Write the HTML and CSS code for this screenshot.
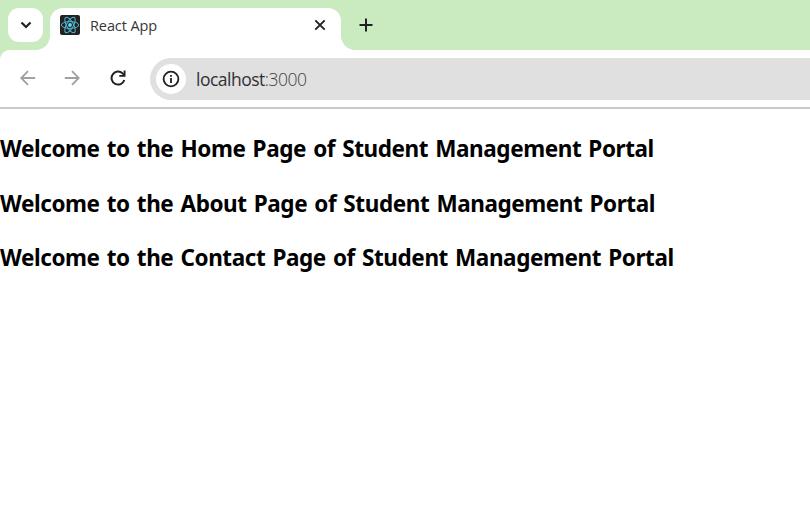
FILE: index.html
```html
<!DOCTYPE html>
<html lang="en">
<head>
<meta charset="utf-8">
<title>React App</title>
<link rel="stylesheet" href="styles.css">
</head>
<body>
<header class="tab-strip">
  <button class="tab-search" aria-label="Search tabs">
    <svg width="12" height="8" viewBox="0 0 12 8"><path d="M1.500 1.500 6 6l4.500-4.500" fill="none" stroke="#202124" stroke-width="2.200"/></svg>
  </button>
  <div class="tab">
    <svg class="favicon" width="20" height="20" viewBox="0 0 20 20">
      <rect width="20" height="20" rx="2" fill="#222"/>
      <g fill="none" stroke="#4fb5d0" stroke-width="1">
        <ellipse cx="10" cy="10" rx="8.700" ry="3.400"/>
        <ellipse cx="10" cy="10" rx="8.700" ry="3.400" transform="rotate(60 10 10)"/>
        <ellipse cx="10" cy="10" rx="8.700" ry="3.400" transform="rotate(120 10 10)"/>
      </g>
      <circle cx="10" cy="10" r="1.900" fill="#61dafb"/>
    </svg>
    <span class="tab-title">React App</span>
    <svg class="close" width="12" height="12" viewBox="0 0 12 12"><path d="m1.300 1.300 9.400 9.400m0-9.400-9.400 9.400" stroke="#202124" stroke-width="1.900"/></svg>
  </div>
  <svg class="new-tab" width="14" height="14" viewBox="0 0 14 14"><path d="M7 .5v13M.5 7h13" stroke="#202124" stroke-width="2"/></svg>
</header>
<nav class="toolbar">
  <svg class="arrow" width="16" height="16" viewBox="0 0 16 16"><path d="M15.200 8H1.500M8 1.200 1.200 8 8 14.800" fill="none" stroke="#a0a0a0" stroke-width="1.800"/></svg>
  <svg class="arrow" width="16" height="16" viewBox="0 0 16 16"><path d="M.8 8h13.700M8 1.200 14.800 8 8 14.800" fill="none" stroke="#a0a0a0" stroke-width="1.800"/></svg>
  <svg class="reload" width="16" height="16" viewBox="0 0 16 16"><path d="M14.300 10A6.500 6.500 0 1 1 12.600 3.400L14.300 5.100" fill="none" stroke="#202124" stroke-width="2"/><path d="M15.500.5v6.200H9.300V4.900h4.300V.5z" fill="#202124"/></svg>
  <div class="address">
    <span class="site-info"><svg width="18" height="18" viewBox="0 0 18 18"><circle cx="9" cy="9" r="7.400" fill="none" stroke="#202124" stroke-width="1.800"/><path d="M8.100 8h1.800v5H8.100zM8.100 5h1.800v1.800H8.100z" fill="#202124"/></svg></span>
    <span class="url">localhost<span class="port">:3000</span></span>
  </div>
</nav>
<main class="page">
  <h2 class="home">Welcome to the Home Page of Student Management Portal</h2>
  <h2 class="about">Welcome to the About Page of Student Management Portal</h2>
  <h2 class="contact">Welcome to the Contact Page of Student Management Portal</h2>
</main>
</body>
</html>
```
FILE: styles.css
```css
* { box-sizing: border-box; }
body {
  margin: 0;
  background: #fff;
  color: #000;
  font-family: "Noto Sans", "Open Sans", sans-serif;
  overflow: hidden;
}
svg { display: block; flex: none; }
.tab-strip {
  display: flex;
  height: 50px;
  padding: 8px 0 0 8px;
  background: #caeabf;
}
.tab-search {
  display: flex;
  align-items: center;
  justify-content: center;
  width: 35px;
  height: 34px;
  padding: 0;
  border: 0;
  border-radius: 11px;
  background: #fff;
}
.tab {
  position: relative;
  display: flex;
  align-items: center;
  width: 290.5px;
  height: 42.5px;
  margin: -.5px 0 0 7px;
  padding: 0 14.5px 7.5px 10px;
  border-radius: 13px 13px 0 0;
  background: #fff;
}
.tab::before,
.tab::after {
  content: "";
  position: absolute;
  bottom: 0;
  width: 14px;
  height: 14px;
}
.tab::before {
  right: 100%;
  background: radial-gradient(circle at 0 0, transparent 13.5px, #fff 14.2px);
}
.tab::after {
  left: 100%;
  background: radial-gradient(circle at 100% 0, transparent 13.5px, #fff 14.2px);
}
.tab-title {
  margin: 1px 0 0 10px;
  font: 400 14.5px/20px "Open Sans", sans-serif;
  letter-spacing: -.1px;
  color: #36373a;
}
.close { margin-left: auto; }
.new-tab { margin: 10px 0 0 18.5px; }
.toolbar {
  display: flex;
  align-items: center;
  height: 59px;
  padding: 0 0 1px 20px;
  border-bottom: 2px solid #cacaca;
  background: radial-gradient(circle at 10px 10px, #fff 9.6px, #caeabf 10.4px) 0 0 / 10px 10px no-repeat #fff;
}
.arrow { margin-right: 28px; }
.reload { margin-left: 1.5px; }
.address {
  display: flex;
  align-items: center;
  flex: 1;
  height: 42px;
  margin: 2px 0 0 24.5px;
  padding-left: 6px;
  border-radius: 21px 0 0 21px;
  background: #e0e0e0;
}
.site-info {
  display: flex;
  align-items: center;
  justify-content: center;
  width: 30px;
  height: 30px;
  border-radius: 50%;
  background: #fff;
}
.url {
  margin-left: 10px;
  font: 400 17.5px/24px "Open Sans", sans-serif;
  letter-spacing: -.5px;
  color: #303134;
}
.port { font-weight: 300; color: #404040; }
.page { padding-top: 24px; }
.page h2 {
  margin: 0 0 22.5px;
  font-size: 22.5px;
  line-height: 32px;
  font-weight: 700;
  letter-spacing: -.42px;
  word-spacing: 1.7px;
  white-space: nowrap;
}
```
